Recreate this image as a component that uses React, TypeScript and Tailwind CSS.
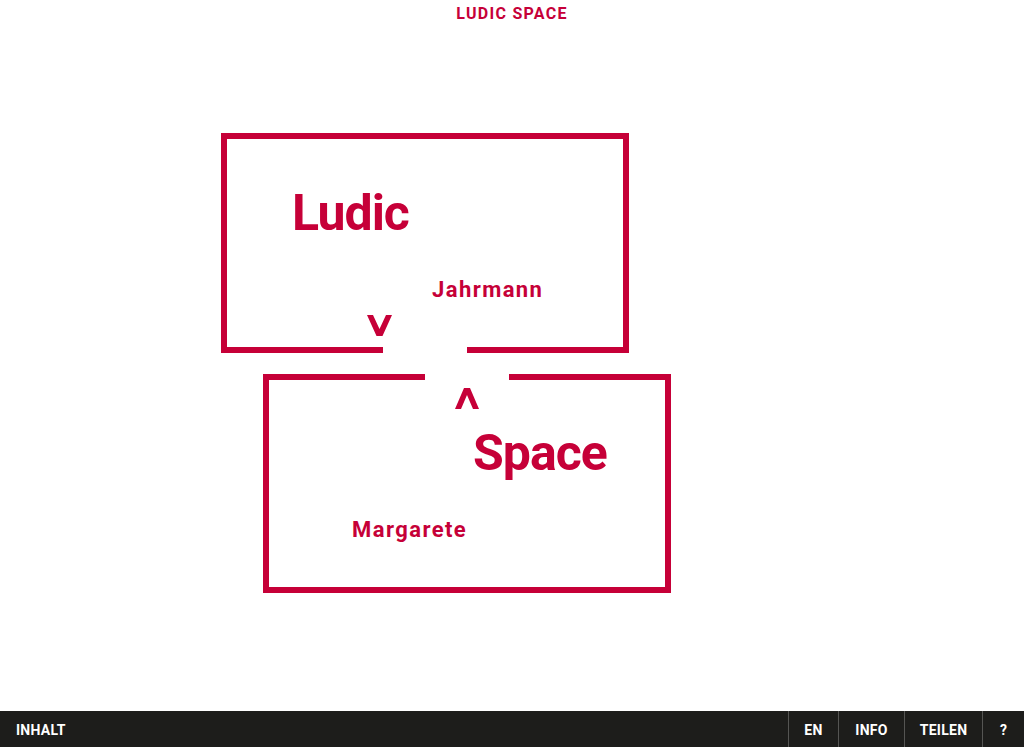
const RED = 'bg-[#c60038]'

const Down = () => (
  <svg width="25" height="21" viewBox="0 0 25 21" className="block fill-[#c60038]">
    <polygon points="0,0 6,0 12.5,14 19,0 25,0 15.5,21 9.5,21" />
  </svg>
)

const Up = () => (
  <svg width="24" height="21" viewBox="0 0 24 21" className="block fill-[#c60038]">
    <polygon points="9,0 15,0 24,21 18,21 12,7 6,21 0,21" />
  </svg>
)

const Bar = ({ className = '' }: { className?: string }) => (
  <div className={`h-[6px] ${RED} ${className}`} />
)

const GapRow = () => (
  <div className="flex justify-between">
    <Bar className="w-[162px]" />
    <Bar className="w-[162px]" />
  </div>
)

const big = 'text-[50px] leading-none font-bold tracking-[-0.02em]'
const small = 'text-[22px] leading-none font-bold tracking-[0.065em]'

const tabs = [
  { label: 'EN', w: 'w-[50px]' },
  { label: 'INFO', w: 'w-[66px]' },
  { label: 'TEILEN', w: 'w-[78px]' },
  { label: '?', w: 'w-[42px]' },
]

export default function App() {
  return (
    <div
      className="h-screen flex flex-col bg-white text-[#c60038]"
      style={{ fontFamily: 'Roboto, "Liberation Sans", sans-serif' }}
    >
      <header className="pt-[6px] text-center text-[16px] leading-none font-bold tracking-[0.08em]">
        LUDIC SPACE
      </header>

      <main className="flex-1">
        <div className="ml-[221px] mt-[111px] w-[408px]">
          <Bar />
          <div className="h-[208px] border-x-[6px] border-[#c60038]">
            <p className={`${big} ml-[65px] pt-[49px]`}>Ludic</p>
            <p className={`${small} ml-[205px] mt-[41px]`}>Jahrmann</p>
            <div className="ml-[140px] mt-[14px]">
              <Down />
            </div>
          </div>
          <GapRow />
        </div>

        <div className="ml-[263px] mt-[21px] w-[408px]">
          <GapRow />
          <div className="h-[207px] border-x-[6px] border-[#c60038]">
            <div className="ml-[186px] pt-[8px]">
              <Up />
            </div>
            <p className={`${big} ml-[204px] mt-[19px]`}>Space</p>
            <p className={`${small} ml-[83px] mt-[41px]`}>Margarete</p>
          </div>
          <Bar />
        </div>
      </main>

      <footer className="h-[36px] flex bg-[#1d1d1b] text-white text-[14px] font-bold tracking-[0.02em]">
        <div className="flex-1 flex items-center pl-4 pt-[2px]">INHALT</div>
        {tabs.map(tab => (
          <div
            key={tab.label}
            className={`${tab.w} flex items-center justify-center pt-[2px] border-l border-[#555553]`}
          >
            {tab.label}
          </div>
        ))}
      </footer>
    </div>
  )
}
